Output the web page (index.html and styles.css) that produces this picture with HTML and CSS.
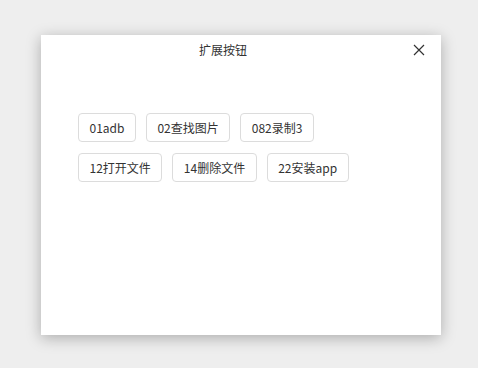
FILE: index.html
```html
<!DOCTYPE html>
<html>
<head>
  <title>扩展按钮</title>
  <link rel="stylesheet" href="styles.css">
</head>
<body>

<div class="dialog">
  <div class="header">
    <span class="title">扩展按钮</span>
    <span class="close">
      <svg width="12" height="12" viewBox="0 0 12 12"><path d="M1 1L11 11M11 1L1 11" stroke="#333" stroke-width="1.2" fill="none"/></svg>
    </span>
  </div>
  <div class="body">
    <div class="row">
      <button class="btn">01adb</button>
      <button class="btn">02查找图片</button>
      <button class="btn">082录制3</button>
    </div>
    <div class="row">
      <button class="btn">12打开文件</button>
      <button class="btn">14删除文件</button>
      <button class="btn">22安装app</button>
    </div>
  </div>
</div>

</body>
</html>
```

FILE: styles.css
```css
html, body { margin: 0; padding: 0; }
body { background: #eeeeee; width: 478px; height: 368px; font-family: "Noto Sans CJK SC", "Noto Sans", sans-serif; color: #333; padding-top: 35px; box-sizing: border-box; }
.dialog { width: 400px; height: 300px; margin-left: 41px; background: #fff; box-shadow: 0 3px 14px rgba(0,0,0,0.28); }
.header { height: 30px; display: flex; align-items: center; }
.title { flex: 1; text-align: center; font-size: 12px; line-height: 30px; }
.close { width: 36px; height: 30px; display: flex; align-items: center; justify-content: center; }
.close svg { display: block; margin-right: 8px; }
.body { padding: 48px 0 0 37px; }
.row { display: flex; gap: 10px; margin-bottom: 11px; }
.btn { height: 29px; padding: 0 10.5px; font-size: 12px; font-family: inherit; color: #333; background: #fff; border: 1px solid #dcdcdc; border-radius: 4px; }
```
